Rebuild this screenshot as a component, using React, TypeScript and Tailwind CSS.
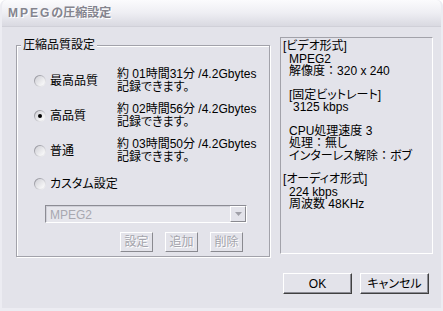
import React from 'react';

const font = "font-['Liberation_Sans','Noto_Sans_CJK_JP',sans-serif] [font-feature-settings:'palt']";

const qualities = [
  { label: '最高品質', time: '約 01時間31分 /4.2Gbytes', checked: false },
  { label: '高品質', time: '約 02時間56分 /4.2Gbytes', checked: true },
  { label: '普通', time: '約 03時間50分 /4.2Gbytes', checked: false },
];

// ラジオボタン
function Radio({ checked }: { checked: boolean }) {
  return (
    <span className="w-[12px] h-[12px] shrink-0 rounded-full bg-linear-to-br from-[#7c7c84] via-[#c8c8ce] to-white p-[1px]">
      <span className="flex w-full h-full rounded-full bg-linear-to-br from-[#d0d0d6] to-white items-center justify-center">
        {checked && <span className="w-[4px] h-[4px] rounded-full bg-black" />}
      </span>
    </span>
  );
}

// 全角コロン（前後に余白）
function Colon() {
  return <span className="[font-feature-settings:normal]">：</span>;
}

// 無効なボタン
function DisabledButton({ label }: { label: string }) {
  return (
    <div className="w-[33px] h-[20px] flex items-center justify-center border border-t-white border-l-white border-r-[#8a8a90] border-b-[#8a8a90] text-[12px] text-[#a4a4ac] [text-shadow:1px_1px_0_#fff]">
      {label}
    </div>
  );
}

function Button({ label }: { label: string }) {
  return (
    <div className="w-[69px] h-[21px] flex items-center justify-center border border-t-white border-l-white border-r-[#404040] border-b-[#404040] shadow-[inset_-1px_-1px_0_#8c8c94] text-[12px] text-black">
      {label}
    </div>
  );
}

export default function App() {
  return (
    <div className={`w-[443px] h-[311px] flex flex-col bg-[#e3e3ea] rounded-t-[6px] border-x-2 border-b-[3px] border-x-[#ececf2] border-b-[#ececf2] overflow-hidden ${font}`}>
      {/* タイトルバー */}
      <div className="h-[27px] shrink-0 flex items-center pl-[6px] bg-linear-to-b from-[#fbfbfd] via-[#eeeef3] to-[#d9d9e1] border-b border-[#d0d0d8]">
        <span className="text-[12px] font-bold text-[#84848e] [text-shadow:1px_1px_0_#fff]">
          <span className="tracking-[2px]">MPEG</span>の圧縮設定
        </span>
      </div>

      <div className="flex pl-[14px] pt-[10px]">
        {/* 圧縮品質設定 */}
        <fieldset className="mt-[1px] w-[254px] h-[219px] border border-[#a2a2aa] shadow-[inset_1px_1px_0_#fff,1px_1px_0_#fff]">
          <legend className="ml-[4px] px-[2px] text-[12px] leading-[14px] text-black bg-[#e3e3ea]">圧縮品質設定</legend>
          <div className="pt-[11px] pl-[17px] flex flex-col">
            {qualities.map((q) => (
              <div key={q.label} className="h-[35px] flex items-center">
                <Radio checked={q.checked} />
                <span className="ml-[4px] w-[67px] text-[12px] text-black">{q.label}</span>
                <div className="flex flex-col text-[12px] leading-[13px] text-black">
                  <span>{q.time}</span>
                  <span>記録できます。</span>
                </div>
              </div>
            ))}
            <div className="h-[32px] flex items-center">
              <Radio checked={false} />
              <span className="ml-[4px] text-[12px] text-black">カスタム設定</span>
            </div>

            {/* コンボボックス */}
            <div className="mt-[5px] ml-[11px] w-[202px] h-[18px] flex border border-t-[#8c8c94] border-l-[#8c8c94] border-b-white border-r-white">
              <div className="flex-1 flex items-center pl-[3px] text-[12px] text-[#a8a8b0] bg-[#e6e6ec] border-t border-l border-[#d0d0d8]">
                MPEG2
              </div>
              <div className="w-[16px] flex items-center justify-center bg-[#e3e3ea] border border-t-white border-l-white border-r-[#8a8a90] border-b-[#8a8a90]">
                <svg width="7" height="4" viewBox="0 0 7 4">
                  <path d="M0 0h7L3.5 4z" fill="#a0a0a8" />
                </svg>
              </div>
            </div>

            <div className="mt-[9px] ml-[86px] flex gap-[12px]">
              <DisabledButton label="設定" />
              <DisabledButton label="追加" />
              <DisabledButton label="削除" />
            </div>
          </div>
        </fieldset>

        {/* 情報パネル */}
        <div className="ml-[10px] w-[153px] h-[217px] border border-t-[#a2a2aa] border-l-[#a2a2aa] border-b-white border-r-white pt-[2px] pl-[2px] text-[12px] leading-[12.5px] text-black">
          <div>[ビデオ形式]</div>
          <div className="pl-[6px]">MPEG2</div>
          <div className="pl-[6px]">解像度<Colon />320 x 240</div>
          <div className="mt-[11px] pl-[6px]">[固定ビットレート]</div>
          <div className="pl-[10px]">3125 kbps</div>
          <div className="mt-[11px] pl-[6px]">CPU処理速度 3</div>
          <div className="pl-[6px]">処理<Colon />無し</div>
          <div className="pl-[6px]">インターレス解除<Colon />ボブ</div>
          <div className="mt-[11px]">[オーディオ形式]</div>
          <div className="pl-[6px]">224 kbps</div>
          <div className="pl-[6px]">周波数 48KHz</div>
        </div>
      </div>

      {/* ボタン */}
      <div className="mt-[16px] pl-[281px] flex gap-[8px]">
        <Button label="OK" />
        <Button label="キャンセル" />
      </div>
    </div>
  );
}
